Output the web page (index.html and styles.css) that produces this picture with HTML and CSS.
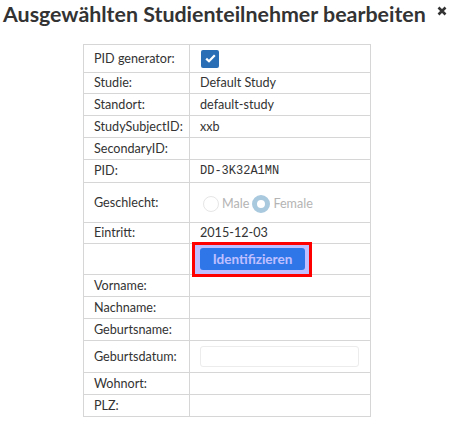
FILE: index.html
```html
<!DOCTYPE html>
<html>
<head>
<meta charset="utf-8">
<link rel="stylesheet" href="styles.css">
</head>
<body>
<div class="modal">
  <div class="header">
    <h1 class="title">Ausgewählten Studienteilnehmer bearbeiten</h1>
    <button class="close" aria-label="close">
      <svg width="10" height="10" viewBox="0 0 10 10"><path d="M1.5 1.5 L8.5 8.5 M8.5 1.5 L1.5 8.5" stroke="#333" stroke-width="2.6" stroke-linecap="butt"/></svg>
    </button>
  </div>
  <div class="table-wrap">
    <table class="form-table">
      <tr class="r28"><td class="label">PID generator:</td><td class="value"><span class="checkbox"><svg width="11" height="9" viewBox="0 0 11 9"><path d="M1.2 4.6 L4 7.3 L9.8 1.3" stroke="#fff" stroke-width="2.2" fill="none"/></svg></span></td></tr>
      <tr class="r21"><td class="label">Studie:</td><td class="value">Default Study</td></tr>
      <tr><td class="label">Standort:</td><td class="value">default-study</td></tr>
      <tr><td class="label">StudySubjectID:</td><td class="value">xxb</td></tr>
      <tr><td class="label">SecondaryID:</td><td class="value"></td></tr>
      <tr class="r23"><td class="label">PID:</td><td class="value mono">DD-3K32A1MN</td></tr>
      <tr class="r40"><td class="label">Geschlecht:</td><td class="value"><div class="radios"><span class="radio"></span><span class="radio-label">Male</span><span class="radio checked"></span><span class="radio-label">Female</span></div></td></tr>
      <tr class="r21"><td class="label">Eintritt:</td><td class="value">2015-12-03</td></tr>
      <tr class="r31"><td class="label"></td><td class="value"><button class="btn">Identifizieren</button></td></tr>
      <tr><td class="label">Vorname:</td><td class="value"></td></tr>
      <tr><td class="label">Nachname:</td><td class="value"></td></tr>
      <tr><td class="label">Geburtsname:</td><td class="value"></td></tr>
      <tr class="r32"><td class="label">Geburtsdatum:</td><td class="value"><input class="input" type="text"></td></tr>
      <tr><td class="label">Wohnort:</td><td class="value"></td></tr>
      <tr><td class="label">PLZ:</td><td class="value"></td></tr>
    </table>
    <div class="highlight"></div>
  </div>
</div>
</body>
</html>
```

FILE: styles.css
```css
html, body {
  margin: 0;
  padding: 0;
  background: #fff;
}
body {
  font-family: Lato, "Open Sans", sans-serif;
  color: #333;
}
.modal {
  width: 459px;
}
.header {
  display: flex;
  align-items: flex-start;
  justify-content: space-between;
  padding: 2px 12px 0 3px;
}
.title {
  margin: 0;
  font-size: 21.4px;
  font-weight: 700;
  line-height: 25px;
  color: #333;
}
.close {
  border: 0;
  background: none;
  padding: 0;
  margin-top: 4px;
  width: 10px;
  height: 10px;
  display: flex;
}
.table-wrap {
  position: relative;
  margin: 17px 0 0 83px;
  width: 288px;
}
.form-table {
  border-collapse: collapse;
  width: 288px;
  font-size: 12.6px;
  table-layout: fixed;
}
.form-table td {
  border: 1px solid #d6d6d6;
  height: 21px;
  padding: 0 10px;
  vertical-align: middle;
  line-height: 16px;
  white-space: nowrap;
}
.form-table td.label {
  width: 85px;
}
.form-table .r28 td { height: 27px; }
.form-table .r21 td { height: 20px; }
.form-table .r23 td { height: 22px; }
.form-table .r40 td { height: 39px; }
.form-table .r31 td { height: 30px; }
.form-table .r32 td { height: 31px; }
.mono {
  font-family: "Liberation Mono", "DejaVu Sans Mono", monospace;
  font-size: 12px;
}
.checkbox {
  display: inline-flex;
  align-items: center;
  justify-content: center;
  width: 18px;
  height: 18px;
  background: #2a6fb6;
  border-radius: 2px;
  vertical-align: middle;
  margin-left: 1px;
}
.radios {
  display: flex;
  align-items: center;
  color: #b4b4b4;
  font-size: 12.6px;
  padding-top: 2px;
}
.radio {
  width: 16px;
  height: 16px;
  border: 1px solid #e6e6e6;
  border-radius: 50%;
  box-sizing: border-box;
  background: #fff;
  margin-left: 3px;
}
.radio.checked {
  border: 5px solid #a9c9de;
  background: #fff;
  width: 18px;
  height: 18px;
  margin-left: 3px;
}
.radio-label {
  margin-left: 3px;
}
.btn {
  display: block;
  margin: 0;
  width: 105px;
  height: 22px;
  border: 0;
  border-radius: 3px;
  background: #3f9ee2;
  color: #fff;
  font-family: Lato, sans-serif;
  font-weight: 700;
  font-size: 13.5px;
  padding: 0;
}
.input {
  display: block;
  box-sizing: border-box;
  width: 159px;
  height: 21px;
  border: 1px solid #ececec;
  border-radius: 3px;
  background: #fff;
  margin: 0;
}
.highlight {
  position: absolute;
  left: 109px;
  top: 198px;
  width: 114px;
  height: 29px;
  border: 3px solid #ff0000;
  background: rgba(0, 0, 255, 0.25);
}
```
